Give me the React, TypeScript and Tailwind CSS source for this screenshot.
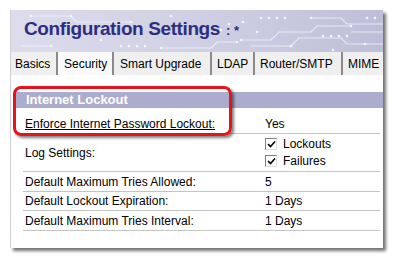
import React from 'react'

const tabs = [
  { name: 'Basics', w: 'w-[45px] pl-[4px]' },
  { name: 'Security', w: 'w-[56px] pl-[6px] border-l-2 border-l-[#8a8a8a] bg-[#fafafa]' },
  { name: 'Smart Upgrade', w: 'w-[98px] pl-[6px] border-l-2 border-l-[#8a8a8a]' },
  { name: 'LDAP', w: 'w-[43px] pl-[5px] border-l-2 border-l-[#8a8a8a]' },
  { name: 'Router/SMTP', w: 'w-[88px] pl-[5px] border-l-2 border-l-[#8a8a8a]' },
  { name: 'MIME', w: 'flex-1 pl-[5px] border-l-2 border-l-[#8a8a8a]' },
]

function Circuit() {
  // faint circuit-board art behind the title
  return (
    <svg className="absolute inset-0" width="373" height="42" viewBox="0 0 373 42">
      <g stroke="#eeeef8" strokeWidth="1.2" fill="none" opacity="0.9">
        <path d="M230 30 H260 L268 22 H300 L306 16 H340" />
        <path d="M240 36 H280 L288 28 H330 L336 34 H373" />
        <path d="M300 8 H330 L336 14 H373" />
        <path d="M20 6 H60 L66 12 H120" />
        <path d="M150 38 H200 L206 32 H226" />
        <path d="M10 36 H40" />
        <path d="M340 22 H373" />
      </g>
      <g fill="#f4f4fb">
        {[
          [20, 6], [60, 6], [120, 12], [150, 38], [226, 32], [230, 30], [340, 16], [300, 8],
          [250, 8], [258, 8], [266, 8], [274, 8], [312, 26], [320, 26], [328, 26], [336, 26],
          [110, 36], [118, 36], [126, 36], [134, 36], [210, 20], [218, 14], [232, 12], [160, 6],
          [90, 30], [246, 22], [356, 8], [364, 8], [280, 36], [322, 40], [354, 34], [40, 36],
        ].map(([x, y], i) => (
          <circle key={i} cx={x} cy={y} r="1.3" />
        ))}
      </g>
    </svg>
  )
}

function Check({ label }: { label: string }) {
  return (
    <div className="flex items-center gap-[6px] h-[17px]">
      <span className="w-[12px] h-[12px] bg-white border border-t-[#808080] border-l-[#808080] border-r-[#e0e0e0] border-b-[#e0e0e0] flex items-center justify-center">
        <svg width="9" height="9" viewBox="0 0 9 9">
          <path d="M1 4 L3.5 6.5 L8 1.5" stroke="#000" strokeWidth="1.6" fill="none" />
        </svg>
      </span>
      <span>{label}</span>
    </div>
  )
}

function Row({ label, children, className = '' }: { label: React.ReactNode; children: React.ReactNode; className?: string }) {
  return (
    <div className={`flex items-center border-b border-[#c4c4c4] ${className}`}>
      <div className="w-[242px] pl-[2px]">{label}</div>
      <div className="flex-1">{children}</div>
    </div>
  )
}

export default function App() {
  return (
    <div className="w-[395px] h-[262px] bg-white overflow-hidden" style={{ fontFamily: '"Liberation Sans", Arial, sans-serif' }}>
      <div className="relative ml-[10px] mt-[10px] w-[373px] h-[238px] bg-white border-l border-[#d0d0d0] shadow-[3px_3px_3px_rgba(0,0,0,0.55)] flex flex-col">
        <div className="relative h-[42px] bg-gradient-to-r from-[#dcdcec] via-[#d0d0e4] to-[#bebed8] overflow-hidden">
          <Circuit />
          <div className="relative pl-[13px] pt-[5px] flex items-baseline text-[#2e2e80]">
            <span className="text-[19px] font-bold tracking-[-0.4px]">Configuration Settings</span>
            <span className="text-[13px] font-bold ml-[6px]">: *</span>
          </div>
        </div>

        <div className="flex h-[23px] bg-[#efefef] text-[12px] text-black whitespace-nowrap">
          {tabs.map(t => (
            <div key={t.name} className={`flex items-center shrink-0 ${t.w}`}>
              {t.name}
            </div>
          ))}
        </div>

        <div className="relative flex-1 pt-[17px] text-[12px] text-black">
          <div className="ml-[3px] h-[16px] bg-[#acacce] text-white font-bold text-[13px] flex items-center pl-[12px]">
            Internet Lockout
          </div>
          <div className="ml-[12px] mr-[3px]">
            <Row label={<span className="underline">Enforce Internet Password Lockout:</span>} className="h-[26px] pt-[6px]">
              Yes
            </Row>
            <Row label="Log Settings:" className="h-[38px]">
              <div className="flex flex-col">
                <Check label="Lockouts" />
                <Check label="Failures" />
              </div>
            </Row>
            <Row label="Default Maximum Tries Allowed:" className="h-[20px]">5</Row>
            <Row label="Default Lockout Expiration:" className="h-[19px]">1 Days</Row>
            <Row label="Default Maximum Tries Interval:" className="h-[20px]">1 Days</Row>
          </div>

          <div className="absolute left-[2px] top-[11px] w-[219px] h-[50px] border-[3px] border-[#e3141b] rounded-[8px] shadow-[2px_2px_3px_rgba(0,0,0,0.5)]" />
        </div>
      </div>
    </div>
  )
}
